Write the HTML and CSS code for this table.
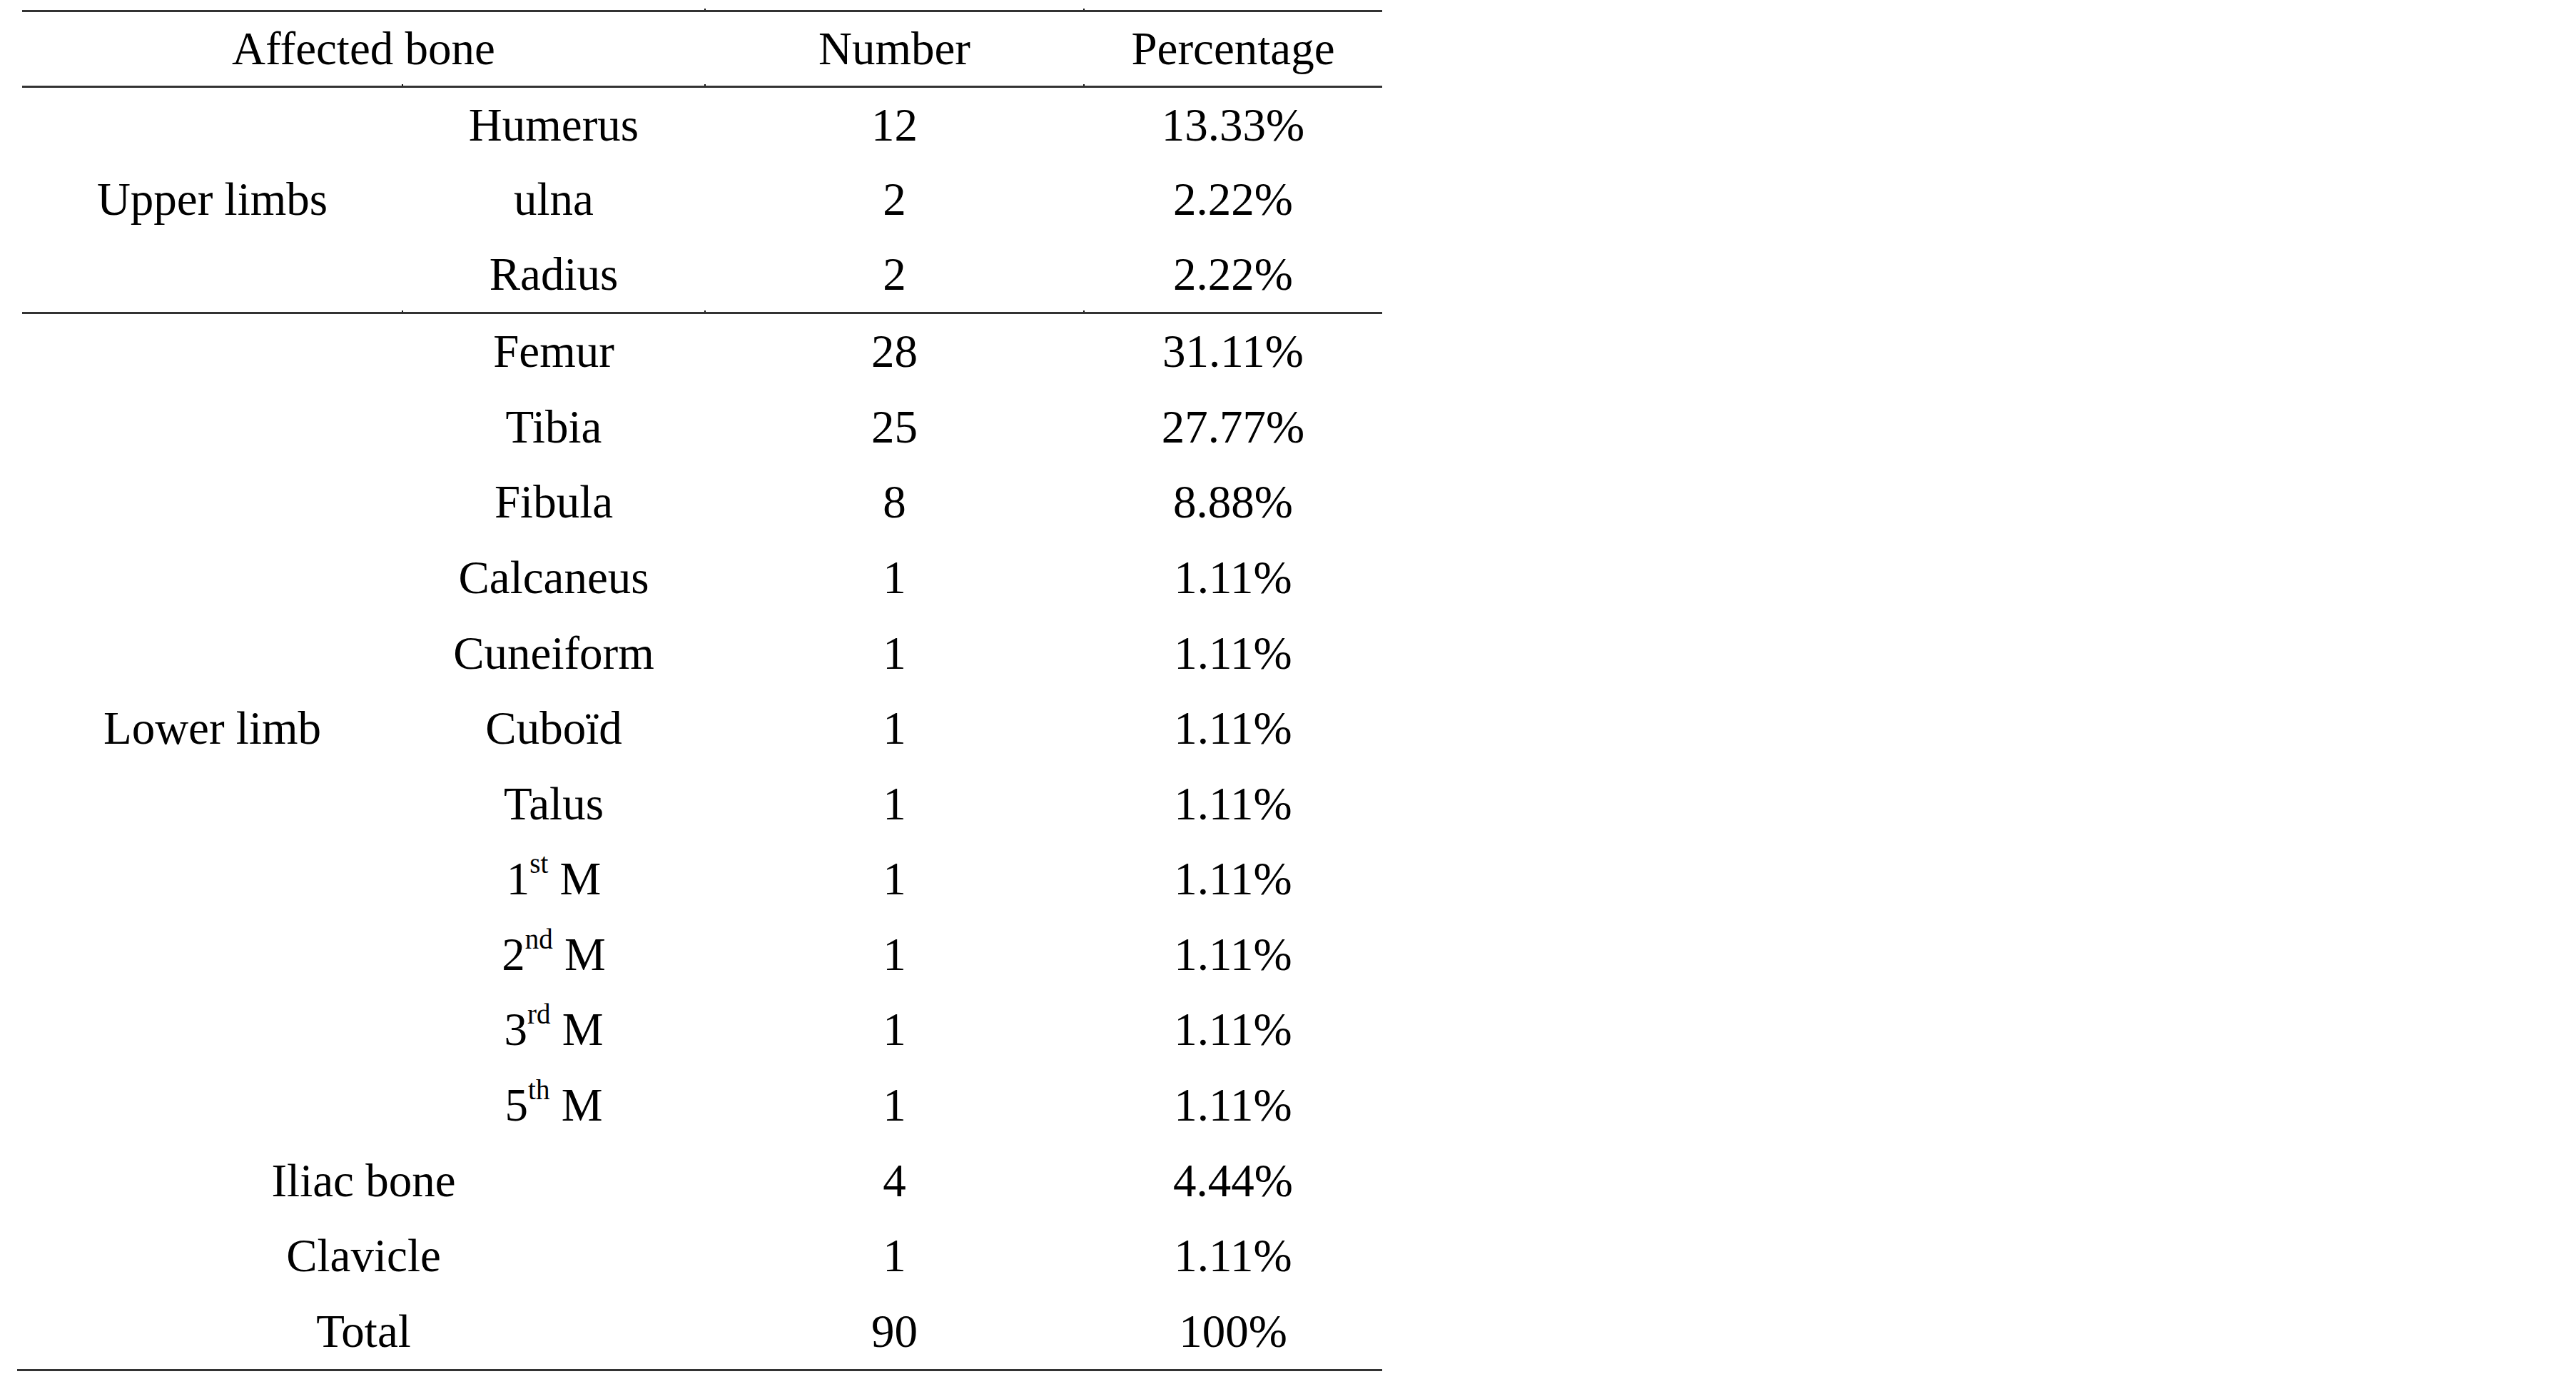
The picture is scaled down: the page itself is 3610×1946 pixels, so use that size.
FILE: index.html
```html
<!DOCTYPE html>
<html lang="en">
<head>
<meta charset="utf-8">
<title>Affected bone distribution</title>
<link rel="stylesheet" href="styles.css">
</head>
<body>
<div class="page">
  <div class="table">
    <div class="group head">
      <div class="cell span2">Affected bone</div>
      <div class="cell tick">Number</div>
      <div class="cell tick">Percentage</div>
    </div>
    <div class="group upper">
      <div class="cell rows3">Upper limbs</div>
      <div class="cell tick">Humerus</div>
      <div class="cell tick">12</div>
      <div class="cell tick">13.33%</div>
      <div class="cell">ulna</div>
      <div class="cell">2</div>
      <div class="cell">2.22%</div>
      <div class="cell">Radius</div>
      <div class="cell">2</div>
      <div class="cell">2.22%</div>
    </div>
    <div class="group lower">
      <div class="cell rows11">Lower limb</div>
      <div class="cell tick">Femur</div>
      <div class="cell tick">28</div>
      <div class="cell tick">31.11%</div>
      <div class="cell">Tibia</div>
      <div class="cell">25</div>
      <div class="cell">27.77%</div>
      <div class="cell">Fibula</div>
      <div class="cell">8</div>
      <div class="cell">8.88%</div>
      <div class="cell">Calcaneus</div>
      <div class="cell">1</div>
      <div class="cell">1.11%</div>
      <div class="cell">Cuneiform</div>
      <div class="cell">1</div>
      <div class="cell">1.11%</div>
      <div class="cell">Cuboïd</div>
      <div class="cell">1</div>
      <div class="cell">1.11%</div>
      <div class="cell">Talus</div>
      <div class="cell">1</div>
      <div class="cell">1.11%</div>
      <div class="cell"><span>1<sup>st</sup> M</span></div>
      <div class="cell">1</div>
      <div class="cell">1.11%</div>
      <div class="cell"><span>2<sup>nd</sup> M</span></div>
      <div class="cell">1</div>
      <div class="cell">1.11%</div>
      <div class="cell"><span>3<sup>rd</sup> M</span></div>
      <div class="cell">1</div>
      <div class="cell">1.11%</div>
      <div class="cell"><span>5<sup>th</sup> M</span></div>
      <div class="cell">1</div>
      <div class="cell">1.11%</div>
      <div class="cell span2">Iliac bone</div>
      <div class="cell">4</div>
      <div class="cell">4.44%</div>
      <div class="cell span2">Clavicle</div>
      <div class="cell">1</div>
      <div class="cell">1.11%</div>
      <div class="cell span2">Total</div>
      <div class="cell tick-below">90</div>
      <div class="cell tick-below">100%</div>
    </div>
    <div class="rule-bottom"></div>
  </div>
</div>
</body>
</html>
```
FILE: styles.css
```css
html, body {
  margin: 0;
  background: #ffffff;
}

body {
  font-family: "Liberation Serif", "Times New Roman", serif;
  font-size: 65px;
  color: #000000;
}

.page {
  padding: 14px 0 0 31px;
}

.table {
  width: 1906px;
  border-top: 3px solid #333333;
}

.group {
  display: grid;
  grid-template-columns: 533px 424px 531px 418px;
}

.head {
  height: 103px;
  border-bottom: 3px solid #333333;
}

.upper {
  height: 314px;
  grid-template-rows: repeat(3, 1fr);
  border-bottom: 3px solid #333333;
}

.lower {
  height: 1478px;
  grid-template-rows: repeat(14, 1fr);
}

.rule-bottom {
  height: 3px;
  background: #333333;
  margin-left: -7px;
}

.cell {
  position: relative;
  display: flex;
  align-items: center;
  justify-content: center;
  white-space: nowrap;
  line-height: normal;
}

.span2 {
  grid-column: span 2;
}

.rows3 {
  grid-row: 1 / span 3;
  grid-column: 1;
}

.rows11 {
  grid-row: 1 / span 11;
  grid-column: 1;
}

.tick::before {
  content: "";
  position: absolute;
  left: -1px;
  top: -5px;
  width: 2px;
  height: 2px;
  background: #111111;
}

.tick-below::after {
  content: "";
  position: absolute;
  left: -6px;
  bottom: -5px;
  width: 2px;
  height: 2px;
  background: #111111;
}

sup {
  font-size: 0.6em;
  line-height: 0;
  vertical-align: 0.78em;
}
```
